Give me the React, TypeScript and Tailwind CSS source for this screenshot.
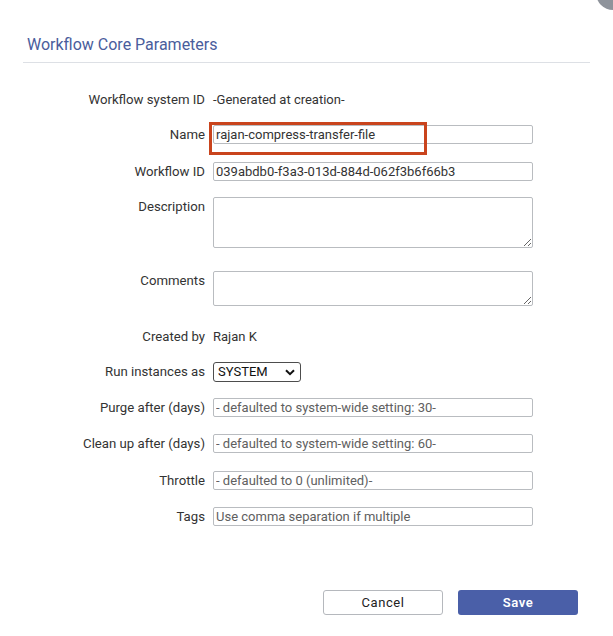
import React from "react";

function Row({
  label,
  children,
  className = "",
  start = false,
  lh = "leading-[19px]",
}: {
  label: string;
  children: React.ReactNode;
  className?: string;
  start?: boolean;
  lh?: string;
}) {
  return (
    <div className={`flex ${start ? "items-start" : "items-center"} leading-[19px] ${className}`}>
      <div className={`w-[205px] shrink-0 text-right text-[13.2px] ${lh} text-[#333]`}>{label}</div>
      <div className="ml-[8px] relative">{children}</div>
    </div>
  );
}

const inputCls =
  "block w-[320px] h-[19px] border border-[#b9bcc0] rounded-[2px] px-[2px] text-[13px] leading-[17px] text-[#333] placeholder:text-[#606060] outline-none bg-white";

export default function App() {
  return (
    <div
      className="w-[613px] h-[636px] bg-white relative overflow-hidden leading-[20px]"
      style={{ fontFamily: "Roboto, 'Liberation Sans', sans-serif" }}
    >
      <div className="absolute left-[596px] top-[-24px] w-[34px] h-[34px] rounded-full bg-[#8e939b]" />
      <div className="pl-[23px] pt-[35px]">
        <h2 className="pl-[4px] text-[16px] leading-[20px] text-[#4a5d9c]">Workflow Core Parameters</h2>
        <div className="mt-[7px] h-px w-[567px] bg-[#dde0e5]" />
      </div>

      <Row label="Workflow system ID" className="mt-[27px]" lh="leading-[20px]">
        <span className="block text-[13px] leading-[20px] text-[#333]">-Generated at creation-</span>
      </Row>

      <Row label="Name" className="mt-[15px]">
        <input className={inputCls} defaultValue="rajan-compress-transfer-file" />
        <div className="absolute left-[-4px] top-[-3px] w-[218px] h-[33px] border-[3px] border-[#c9441d] pointer-events-none" />
      </Row>

      <Row label="Workflow ID" className="mt-[18px]">
        <input className={inputCls} defaultValue="039abdb0-f3a3-013d-884d-062f3b6f66b3" />
      </Row>

      <Row label="Description" className="mt-[16px]" start lh="leading-[20px]">
        <textarea className="block w-[320px] h-[51px] border border-[#b9bcc0] rounded-[2px] px-[2px] text-[13px] outline-none bg-white" />
      </Row>

      <Row label="Comments" className="mt-[23px]" start lh="leading-[20px]">
        <textarea className="block w-[320px] h-[35px] border border-[#b9bcc0] rounded-[2px] px-[2px] text-[13px] outline-none bg-white" />
      </Row>

      <Row label="Created by" className="mt-[21px]" lh="leading-[20px]">
        <span className="block text-[13px] leading-[20px] text-[#333]">Rajan K</span>
      </Row>

      <Row label="Run instances as" className="mt-[15px]" lh="leading-[20px]">
        <div className="w-[88px] h-[20px] border border-[#4d4d4d] rounded-[3px] flex items-center justify-between pl-[4px] pr-[5px] bg-white">
          <span className="text-[13px] leading-[18px] text-[#111]">SYSTEM</span>
          <svg width="10" height="7" viewBox="0 0 10 7">
            <path d="M1 1.2 L5 5.2 L9 1.2" fill="none" stroke="#111" strokeWidth="2" />
          </svg>
        </div>
      </Row>

      <Row label="Purge after (days)" className="mt-[16px]">
        <input className={inputCls} placeholder="- defaulted to system-wide setting: 30-" />
      </Row>

      <Row label="Clean up after (days)" className="mt-[17px]">
        <input className={inputCls} placeholder="- defaulted to system-wide setting: 60-" />
      </Row>

      <Row label="Throttle" className="mt-[18px]">
        <input className={inputCls} placeholder="- defaulted to 0 (unlimited)-" />
      </Row>

      <Row label="Tags" className="mt-[17px]">
        <input className={inputCls} placeholder="Use comma separation if multiple" />
      </Row>

      <div className="mt-[64px] flex justify-end gap-[15px] pr-[35px]">
        <button className="w-[120px] h-[25px] border border-[#b5b8bd] rounded-[3px] bg-white text-[13px] leading-[20px] tracking-[0.6px] text-[#222]">
          Cancel
        </button>
        <button className="w-[120px] h-[25px] rounded-[3px] bg-[#4a5fa8] text-[13px] leading-[20px] font-semibold tracking-[0.6px] text-white">
          Save
        </button>
      </div>
    </div>
  );
}
